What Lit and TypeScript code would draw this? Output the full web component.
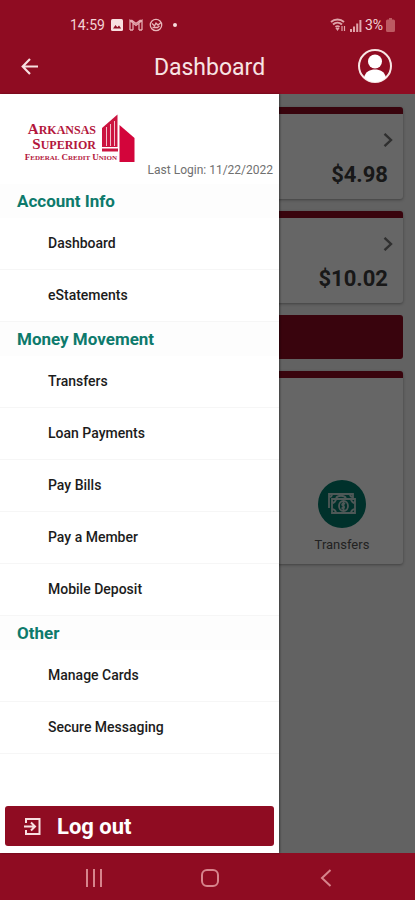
import { LitElement, html, css, svg } from "lit";
import { customElement, property } from "lit/decorators.js";

interface MenuSection {
  title: string;
  items: string[];
}

const SECTIONS: MenuSection[] = [
  { title: "Account Info", items: ["Dashboard", "eStatements"] },
  {
    title: "Money Movement",
    items: ["Transfers", "Loan Payments", "Pay Bills", "Pay a Member", "Mobile Deposit"],
  },
  { title: "Other", items: ["Manage Cards", "Secure Messaging"] },
];

const BALANCES = ["$4.98", "$10.02"];

@customElement("status-bar")
export class StatusBar extends LitElement {
  static styles = css`
    :host {
      display: flex;
      justify-content: space-between;
      align-items: center;
      height: 20px;
      padding: 15px 20px 3px 70px;
      color: #f3d3d5;
      font-size: 14px;
      line-height: 20px;
    }
    .group {
      display: flex;
      align-items: center;
      gap: 6px;
    }
    .right {
      gap: 3px;
    }
    svg {
      display: block;
    }
    .dot {
      width: 4px;
      height: 4px;
      margin-left: 4px;
      border-radius: 50%;
      background: #f6dcdc;
    }
  `;

  render() {
    return html`
      <div class="group">
        <span>14:59</span>
        <svg width="12" height="12" viewBox="0 0 12 12" aria-hidden="true">
          <rect width="12" height="12" rx="1.5" fill="#f8dfe0" />
          <path d="M2 9.5 4.5 6l1.8 2.2L8 6.5l2.2 3z" fill="#8f0c22" />
        </svg>
        <svg width="14" height="12" viewBox="0 0 14 12" fill="none" stroke="#e5aab0" aria-hidden="true">
          <path d="M1 11V1.500l6 5 6-5V11M4 11V4M10 11V4M1 11h3M10 11h3M1 1.500h2l4 3 4-3h2" stroke-width="1.300" />
        </svg>
        <svg width="14" height="14" viewBox="0 0 14 14" fill="none" stroke="#e8b6ba" aria-hidden="true">
          <circle cx="7" cy="7" r="5.700" stroke-width="1.300" />
          <path d="M3 5.500 5.500 8l1.500-3 2 2 3-2.500M3.500 9.500h5l2-1.500" stroke-width="1.300" />
        </svg>
        <span class="dot"></span>
      </div>
      <div class="group right">
        <svg width="16" height="14" viewBox="0 0 16 14" fill="none" stroke="#dfa3a9" aria-hidden="true">
          <path d="M1 4C4.500.6 10.500.6 14 4M3 6.500c2.600-2.400 6.400-2.400 9 0M5.500 9c1.300-1.100 2.700-1.100 4 0" stroke-width="1.900" />
          <path d="M6.500 10.500h2L7.500 12zM12 8v5M14.500 13V8" stroke-width="1.200" />
        </svg>
        <svg width="13" height="13" viewBox="0 0 13 13" fill="#dfa3a9" aria-hidden="true">
          <path d="M1 10h2v3H1zM4 7.500h2V13H4zM7.200 4.500h2V13h-2zM10.400 1h2v12h-2z" />
        </svg>
        <span>3%</span>
        <svg width="9" height="14" viewBox="0 0 9 14" fill="#bd5a62" aria-hidden="true">
          <path d="M3 0h3v1.500h1.500Q9 1.500 9 3v9.500Q9 14 7.500 14h-6Q0 14 0 12.500V3q0-1.500 1.500-1.500H3z" />
        </svg>
      </div>
    `;
  }
}

@customElement("credit-logo")
export class CreditLogo extends LitElement {
  static styles = css`
    :host {
      display: flex;
      align-items: flex-end;
      color: #b3163c;
      font-family: "Liberation Serif", serif;
      font-weight: 700;
    }
    .words {
      display: flex;
      flex-direction: column;
      align-items: flex-end;
      width: 96px;
      white-space: nowrap;
      text-transform: uppercase;
    }
    .name {
      margin-right: 21px;
      font-size: 12px;
      line-height: 14px;
    }
    .name::first-letter {
      font-size: 15px;
      line-height: 14px;
    }
    .kind {
      font-size: 7px;
      line-height: 10px;
    }
    .kind span {
      display: inline-block;
      margin-left: 2px;
    }
    .kind span::first-letter {
      font-size: 9px;
    }
    svg {
      display: block;
      margin-left: -16px;
    }
  `;

  render() {
    return html`
      <div class="words">
        <div class="name">Arkansas</div>
        <div class="name">Superior</div>
        <div class="kind"><span>Federal</span><span>Credit</span><span>Union</span></div>
      </div>
      <svg width="34" height="49" viewBox="0 0 34 49" aria-hidden="true">
        <path d="M1 33V14L16.500 0.500V33z" fill="#cb1440" />
        <path d="M5.500 32V13M9.500 32V10M13.500 32V7" stroke="#f2c0cc" stroke-width="1" />
        <path d="M1 34.500h16v3H1z" fill="#cb1440" />
        <path d="M18.500 48V11L33.500 24V48z" fill="#d3053b" />
      </svg>
    `;
  }
}

@customElement("balance-card")
export class BalanceCard extends LitElement {
  @property() amount = "";

  static styles = css`
    :host {
      display: flex;
      flex-direction: column;
      align-items: flex-end;
      gap: 14px;
      box-sizing: border-box;
      height: 92px;
      padding: 19px 10px 0 0;
      border-top: 7px solid #8f0c22;
      border-radius: 3px;
      background: #fff;
      box-shadow: 0 1px 3px rgba(0, 0, 0, 0.35);
    }
    .amount {
      padding-right: 5px;
      font-size: 22px;
      line-height: 28px;
      font-weight: 700;
      color: #3c3c3c;
    }
    svg {
      display: block;
    }
  `;

  render() {
    return html`
      <svg width="10" height="14" viewBox="0 0 10 14" fill="none" stroke="#777" stroke-width="2.400" aria-hidden="true">
        <path d="M1.500 0.800 8 7 1.500 13.200" />
      </svg>
      <span class="amount">${this.amount}</span>
    `;
  }
}

@customElement("side-drawer")
export class SideDrawer extends LitElement {
  static styles = css`
    :host {
      display: flex;
      flex-direction: column;
      background: #fff;
      box-shadow: 1px 0 2px rgba(0, 0, 0, 0.4);
    }
    .head {
      display: flex;
      justify-content: space-between;
      align-items: flex-end;
      height: 69px;
      padding: 0 6px 21px 21px;
    }
    .login {
      margin: 0 0 -15px -16px;
      color: #707070;
      font-size: 12px;
      line-height: 16px;
      white-space: nowrap;
    }
    h2 {
      margin: 0;
      padding-left: 17px;
      color: #0d7a6c;
      font-size: 17px;
      line-height: 34px;
      font-weight: 700;
      background: #fdfdfd;
    }
    ul {
      margin: 0;
      padding: 0;
      list-style: none;
    }
    a {
      display: block;
      box-sizing: border-box;
      height: 52px;
      padding-left: 48px;
      border-bottom: 1px solid #f6f6f6;
      color: #1c1c1c;
      font-size: 14px;
      line-height: 51px;
      font-weight: 500;
      text-decoration: none;
    }
    button {
      display: flex;
      align-items: center;
      gap: 16px;
      height: 40px;
      margin: auto 5px 7px;
      padding: 0 19px;
      border: 0;
      border-radius: 3px;
      background: #8f0c22;
      color: #fff;
      font: inherit;
      font-size: 22px;
      font-weight: 700;
    }
  `;

  render() {
    return html`
      <div class="head">
        <credit-logo></credit-logo>
        <p class="login">Last Login: 11/22/2022</p>
      </div>
      <nav>
        ${SECTIONS.map(
          (section) => html`
            <h2>${section.title}</h2>
            <ul>
              ${section.items.map((item) => html`<li><a href="#">${item}</a></li>`)}
            </ul>
          `,
        )}
      </nav>
      <button type="button">
        <svg width="17" height="19" viewBox="0 0 17 19" fill="none" stroke="#f8dfe0" stroke-width="2" aria-hidden="true">
          <path d="M2 6V2h13.500v15H2v-4M0 9.500h10M7 5.500l4 4-4 4" />
        </svg>
        <span>Log out</span>
      </button>
    `;
  }
}

const moneyIcon = svg`
  <path d="M2 15V1h24v5M2 4c2 0 3-1 3-3M23 1c0 2 1 3 3 3M9 5c2-3 8-3 10 0" />
  <path d="M5 6h23v14H5zM5 10c2 0 4-2 4-4M24 6c0 2 2 4 4 4M28 16c-2 0-4 2-4 4M9 20c0-2-2-4-4-4" />
  <ellipse cx="16.500" cy="13" rx="4.500" ry="5" />
  <path d="M18 11c-2-1.500-4 .5-2 1.700s1.500 3.300-1.500 2M16.500 9v8" />
`;

@customElement("app-root")
export class AppRoot extends LitElement {
  static styles = css`
    :host {
      display: grid;
      grid-template-rows: auto 1fr auto;
      min-height: 100vh;
      font-family: Roboto, "Noto Sans", sans-serif;
      background: #f4f4f4;
    }
    header {
      background: #8f0c22;
    }
    .bar {
      display: grid;
      grid-template-columns: 46px 1fr 40px;
      align-items: center;
      height: 56px;
      padding: 0 20px 0 18px;
    }
    h1 {
      margin: 0;
      padding-top: 3px;
      color: #f8e4e4;
      font-size: 23px;
      line-height: 32px;
      font-weight: 400;
      text-align: center;
    }
    button {
      display: flex;
      align-items: center;
      justify-content: center;
      padding: 0;
      border: 0;
      background: none;
    }
    .back {
      justify-self: start;
      width: 24px;
      height: 24px;
    }
    .stage {
      display: grid;
      grid-template-columns: 1fr;
    }
    main,
    .scrim {
      grid-area: 1 / 1;
    }
    main {
      display: flex;
      flex-direction: column;
      gap: 12px;
      padding: 13px 12px;
    }
    .scrim {
      display: grid;
      grid-template-columns: 1fr 136px;
      background: rgba(0, 0, 0, 0.6);
      position: relative;
    }
    .action {
      height: 44px;
      border-radius: 3px;
      background: #8f0c22;
    }
    .tiles {
      display: flex;
      justify-content: flex-end;
      align-items: flex-end;
      box-sizing: border-box;
      height: 193px;
      padding-bottom: 10px;
      border-top: 7px solid #8f0c22;
      border-radius: 3px;
      background: #fff;
      box-shadow: 0 1px 3px rgba(0, 0, 0, 0.35);
    }
    .tile {
      display: flex;
      flex-direction: column;
      align-items: center;
      gap: 8px;
      width: 122px;
      color: #555;
      font: inherit;
      font-size: 13px;
      line-height: 18px;
    }
    .disc {
      display: flex;
      align-items: center;
      justify-content: center;
      width: 48px;
      height: 48px;
      border-radius: 50%;
      background: #007a6c;
    }
    footer {
      display: flex;
      justify-content: space-between;
      align-items: center;
      height: 47px;
      padding: 2px 79px 0 84px;
      box-sizing: border-box;
      background: #8f0c22;
    }
    footer button {
      width: 20px;
      height: 24px;
    }
  `;

  render() {
    return html`
      <header>
        <status-bar></status-bar>
        <div class="bar">
          <button class="back" type="button" aria-label="Back">
            <svg width="18" height="17" viewBox="0 0 18 17" fill="none" stroke="#f8dfe0" stroke-width="2.200" aria-hidden="true">
              <path d="M17 8.500H2M9 1 1.700 8.500 9 16" />
            </svg>
          </button>
          <h1>Dashboard</h1>
          <button type="button" aria-label="Profile">
            <svg width="36" height="36" viewBox="0 0 36 36" aria-hidden="true">
              <circle cx="18" cy="18" r="16" fill="none" stroke="#f8e6e4" stroke-width="2" />
              <circle cx="18" cy="13.500" r="7" fill="#fff" />
              <path d="M7 29.500C8.500 23.500 13 21.500 18 21.500S27.500 23.500 29 29.500Q24 34 18 34T7 29.500z" fill="#fff" />
            </svg>
          </button>
        </div>
      </header>
      <div class="stage">
        <main>
          ${BALANCES.map((amount) => html`<balance-card amount=${amount}></balance-card>`)}
          <div class="action"></div>
          <section class="tiles">
            <button class="tile" type="button">
              <span class="disc">
                <svg width="30" height="22" viewBox="0 0 30 22" fill="none" stroke="#c4dcd9" stroke-width="1.800" aria-hidden="true">
                  ${moneyIcon}
                </svg>
              </span>
              <span>Transfers</span>
            </button>
          </section>
        </main>
        <div class="scrim">
          <side-drawer></side-drawer>
        </div>
      </div>
      <footer>
        <button type="button" aria-label="Recent apps">
          <svg width="18" height="18" viewBox="0 0 18 18" stroke="#d7848c" stroke-width="2" aria-hidden="true">
            <path d="M2 0v18M9 0v18M16 0v18" />
          </svg>
        </button>
        <button type="button" aria-label="Home">
          <svg width="20" height="20" viewBox="0 0 20 20" fill="none" stroke="#d7848c" stroke-width="2" aria-hidden="true">
            <rect x="2" y="2" width="16" height="16" rx="5" />
          </svg>
        </button>
        <button type="button" aria-label="Previous">
          <svg width="12" height="18" viewBox="0 0 12 18" fill="none" stroke="#d7848c" stroke-width="2" aria-hidden="true">
            <path d="M10.500 1 2 9l8.500 8" />
          </svg>
        </button>
      </footer>
    `;
  }
}
